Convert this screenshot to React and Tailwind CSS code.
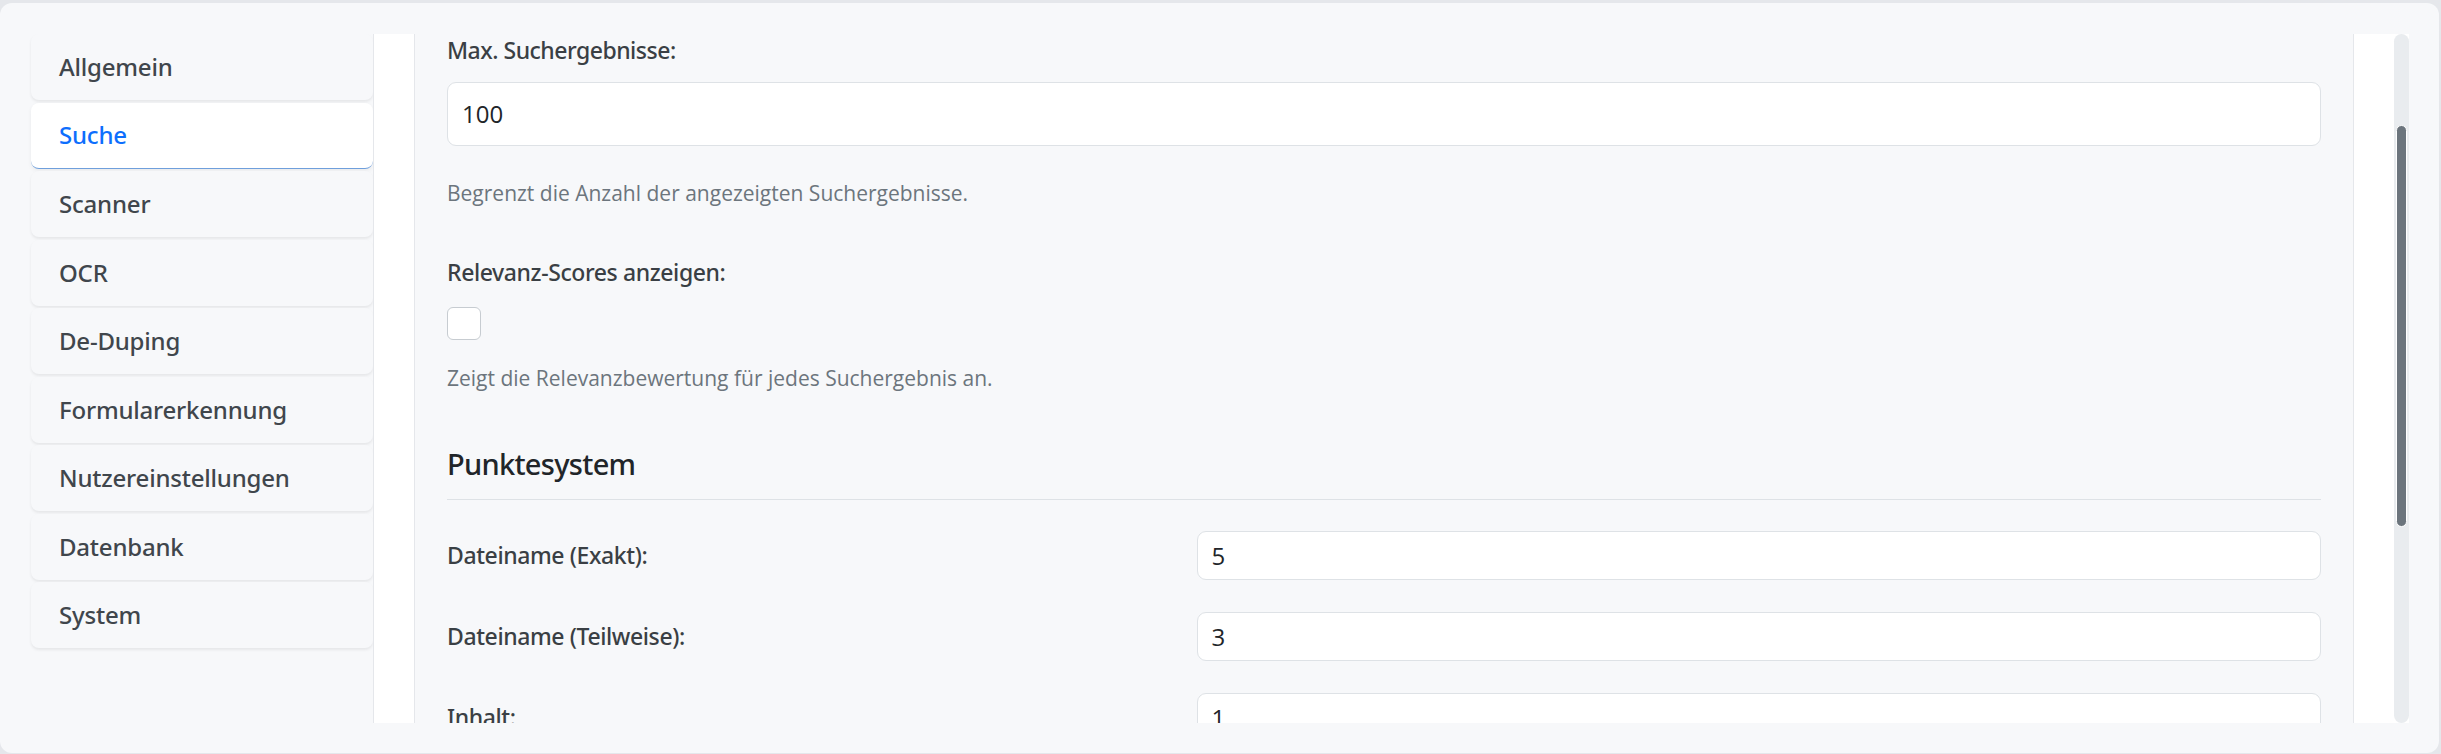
import React from "react";

const navItems = [
  "Allgemein",
  "Suche",
  "Scanner",
  "OCR",
  "De-Duping",
  "Formularerkennung",
  "Nutzereinstellungen",
  "Datenbank",
  "System",
];

const scoreRows = [
  { label: "Dateiname (Exakt):", value: "5" },
  { label: "Dateiname (Teilweise):", value: "3" },
  { label: "Inhalt:", value: "1" },
];

export default function App() {
  const active = "Suche";

  return (
    <div
      className="h-[754px] bg-[#e5e7eb] pt-[3px] pr-[2px] pb-px overflow-hidden"
      style={{ fontFamily: '"Open Sans", "Noto Sans", sans-serif' }}
    >
      <div className="h-full bg-[#f7f8fa] rounded-xl pt-[31px] pl-[31px] pr-[30px] flex">
        {/* Sidebar */}
        <div className="w-[342px] flex flex-col gap-[2.5px]">
          {navItems.map((item) => {
            const isActive = item === active;
            return (
              <div
                key={item}
                className={`h-[66px] shrink-0 flex items-center px-7 rounded-lg font-['Noto_Sans'] font-medium text-[24px] tracking-[-0.2px] ${
                  isActive
                    ? "bg-white text-[#0d6efd] border-b border-[#6f9fdc] shadow-[0_2px_4px_rgba(0,0,0,0.06)]"
                    : "bg-[#f7f8fa] text-[#40464c] shadow-[0_2px_3px_rgba(0,0,0,0.07)]"
                }`}
              >
                {item}
              </div>
            );
          })}
        </div>

        {/* Main scroll area */}
        <div className="flex-1 h-[689px] bg-white border-l border-[#e5e7eb] flex pl-10">
          <div className="flex-1 bg-[#f7f8fa] border-x border-[#e5e7eb] px-8 overflow-hidden">
            <label className="block font-['Noto_Sans'] text-[23px] leading-[32px] font-medium tracking-[-0.5px] text-[#3a3f44]">
              Max. Suchergebnisse:
            </label>
            <div className="mt-4 h-16 bg-white border border-[#dee2e6] rounded-[9px] flex items-center px-[14px] text-[24px] text-[#212529]">
              100
            </div>
            <p className="mt-[31px] text-[21px] leading-[32px] text-[#6c757d]">
              Begrenzt die Anzahl der angezeigten Suchergebnisse.
            </p>

            <label className="block mt-[45px] font-['Noto_Sans'] text-[23px] leading-[36px] font-medium tracking-[-0.4px] text-[#3a3f44]">
              Relevanz-Scores anzeigen:
            </label>
            <div className="mt-[17px] w-[34px] h-[33px] bg-white border border-[#c7ccd1] rounded-md" />
            <p className="mt-[22px] text-[21px] leading-[32px] text-[#6c757d]">
              Zeigt die Relevanzbewertung für jedes Suchergebnis an.
            </p>

            <h3 className="mt-[52px] font-['Noto_Sans'] text-[29px] leading-[36px] font-medium tracking-[-0.7px] text-[#212529]">
              Punktesystem
            </h3>
            <div className="mt-[17px] border-t border-[#dee2e6]" />

            <div className="mt-[31px] flex flex-col gap-8">
              {scoreRows.map((row) => (
                <div key={row.label} className="grid grid-cols-5 items-center">
                  <span className="col-span-2 font-['Noto_Sans'] text-[23px] font-medium tracking-[-0.4px] text-[#3a3f44]">
                    {row.label}
                  </span>
                  <div className="col-span-3 h-[49px] bg-white border border-[#dee2e6] rounded-[9px] flex items-center px-[14px] text-[24px] text-[#212529]">
                    {row.value}
                  </div>
                </div>
              ))}
            </div>
          </div>
          <div className="w-10" />
          {/* Scrollbar */}
          <div className="w-[15px] bg-[#e9ecef] rounded-full flex flex-col items-center pt-[91px]">
            <div className="w-[11px] h-[402px] bg-[#6c757d] border border-white rounded-full" />
          </div>
        </div>
      </div>
    </div>
  );
}
